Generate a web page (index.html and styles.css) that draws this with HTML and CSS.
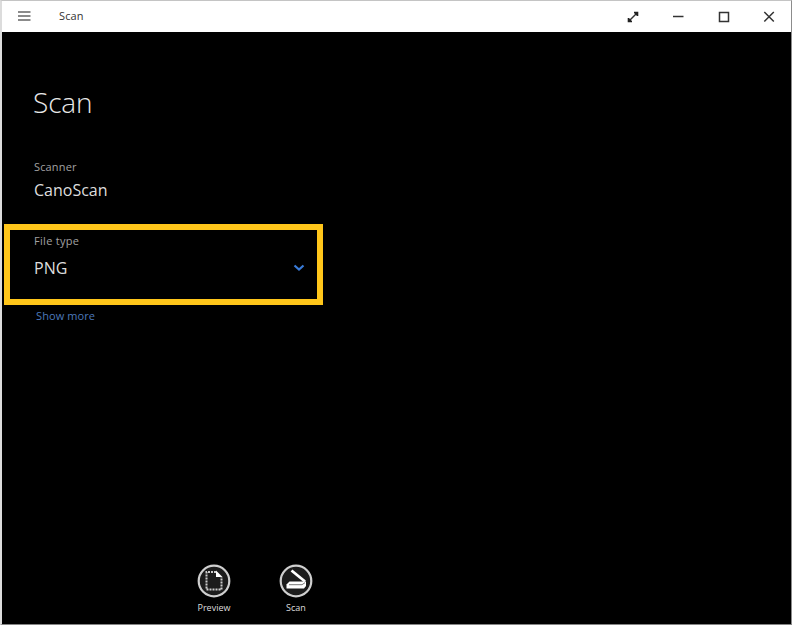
FILE: index.html
```html
<!DOCTYPE html>
<html lang="en">
<head>
<meta charset="utf-8">
<title>Scan</title>
<link rel="stylesheet" href="styles.css">
</head>
<body>
<div class="window">
  <header class="titlebar">
    <svg class="menu" width="14" height="12" viewBox="0 0 14 12"><path d="M0 1h12.500M0 5h12.500M0 9h12.500"/></svg>
    <span class="app-name">Scan</span>
    <div class="controls">
      <svg width="14" height="14" viewBox="0 0 14 14"><path d="M3.500 10.500L10.500 3.500"/><path class="solid" d="M8 1.700h4.300V6L11 6 8 3zM1.700 8V12.300H6V11L3 8z"/></svg>
      <svg width="14" height="14" viewBox="0 0 14 14"><path d="M2 6.500h10.500"/></svg>
      <svg width="14" height="14" viewBox="0 0 14 14"><path d="M2.500 2.500h9v9h-9z"/></svg>
      <svg width="14" height="14" viewBox="0 0 14 14"><path d="M2.300 2l9.500 9.500M11.800 2L2.300 11.500"/></svg>
    </div>
  </header>
  <main class="content">
    <h1 class="title"><span>Scan</span></h1>
    <div class="label scanner-label"><span>Scanner</span></div>
    <div class="value scanner"><span>CanoScan</span></div>
    <section class="file-type">
      <div class="label type-label"><span>File type</span></div>
      <div class="select">
        <span class="value">PNG</span>
        <svg width="12" height="8" viewBox="0 0 12 8"><path d="M1.500 1.500L6 5.500l4.500-4"/></svg>
      </div>
    </section>
    <a class="more">Show more</a>
  </main>
  <footer class="commands">
    <div class="command">
      <svg width="34" height="34" viewBox="0 0 34 34"><circle cx="17" cy="17" r="15.300"/><path class="dotted" d="M19 8H9.500v17.500h15V13"/><path class="fold" d="M19 6.500l6.500 6.500H19z"/></svg>
      <span>Preview</span>
    </div>
    <div class="command">
      <svg width="34" height="34" viewBox="0 0 34 34"><circle cx="17" cy="17" r="15.300"/><path class="lid" d="M12.500 6.500L26 17.500"/><path class="base" d="M10.500 17.500H27v4.500l-2 2.500H7.500v-4z"/><path class="slot" d="M10 20.700h13l3-2"/></svg>
      <span>Scan</span>
    </div>
  </footer>
</div>
</body>
</html>
```
FILE: styles.css
```css
* { box-sizing: border-box; }
body { margin: 0; background: #000; font-family: "Open Sans", "Noto Sans", sans-serif; }
svg { display: block; fill: none; flex: none; }
.window {
  width: 792px; height: 625px; display: flex; flex-direction: column;
  border: solid; border-width: 1px 1px 1px 2px;
  border-color: #c4c4c4 #8c8c8c #858585 #dcdcdc; background: #000;
}
.titlebar { height: 31px; flex: none; display: flex; align-items: center; background: #fff; padding: 0 15px 0 16px; }
.titlebar svg { stroke: #333; stroke-width: 1.5; }
.titlebar .menu { stroke: #666; stroke-width: 1.700; }
.titlebar .solid { fill: #222; stroke: none; }
.app-name { margin: -2px 0 0 27px; font-size: 11px; line-height: 16px; color: #333; letter-spacing: .1px; }
.controls { display: flex; gap: 31.500px; margin-left: auto; }
.content { flex: 1; display: flex; flex-direction: column; align-items: flex-start; color: #ddd; }
.title { margin: 50px 0 0 31px; font-size: 28px; font-weight: 300; line-height: 40px; letter-spacing: -.1px; color: #e8e8e8; }
.label { font-size: 11px; line-height: 16px; letter-spacing: .15px; color: #a2a2a2; }
.scanner-label { margin: 37px 0 0 32px; }
.value { font-size: 16px; line-height: 24px; color: #ddd; }
.scanner { margin: 3px 0 0 32px; }
.file-type {
  width: 319px; height: 81px; margin: 22px 0 0 2px; padding: 3px 12px 0 24px;
  border: 6px solid #ffc61a;
}
.type-label { letter-spacing: .3px; }
.select { display: flex; align-items: center; justify-content: space-between; margin-top: 7px; }
.select svg { stroke: #397bd8; stroke-width: 2.200; }
.more { margin: 3px 0 0 34px; font-size: 11px; line-height: 16px; letter-spacing: .1px; color: #4c79bb; }
.commands { height: 60px; flex: none; display: flex; gap: 48px; padding-left: 195px; }
.command { width: 34px; display: flex; flex-direction: column; align-items: center; font-size: 9px; line-height: 12px; color: #ddd; white-space: nowrap; }
.command span { margin-top: 4px; }
.command circle { fill: #1c1c1c; stroke: #cfcfcf; stroke-width: 2.200; }
.dotted { stroke: #ccc; stroke-width: 2; stroke-dasharray: 2 1; }
.fold { fill: #fff; }
.lid { stroke: #fff; stroke-width: 2.800; }
.base { fill: #fff; }
.slot { stroke: #777; stroke-width: 1; }
```
